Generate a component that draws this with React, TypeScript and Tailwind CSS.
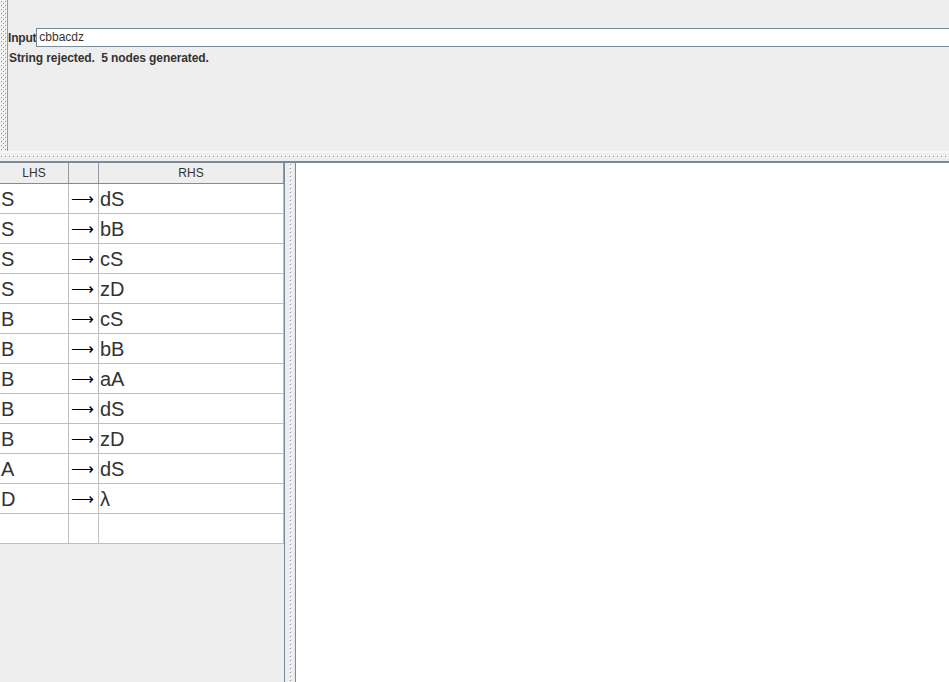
import React from "react";

function Bumps({ id, className }: { id: string; className: string }) {
  return (
    <svg className={className} xmlns="http://www.w3.org/2000/svg">
      <defs>
        <pattern id={id} width="4" height="4" patternUnits="userSpaceOnUse">
          <rect x="0" y="0" width="1" height="1" fill="#ffffff" />
          <rect x="1" y="1" width="1" height="1" fill="#7f91a8" />
          <rect x="2" y="2" width="1" height="1" fill="#ffffff" />
          <rect x="3" y="3" width="1" height="1" fill="#7f91a8" />
        </pattern>
      </defs>
      <rect width="100%" height="100%" fill={`url(#${id})`} />
    </svg>
  );
}

const rows: [string, string][] = [
  ["S", "dS"],
  ["S", "bB"],
  ["S", "cS"],
  ["S", "zD"],
  ["B", "cS"],
  ["B", "bB"],
  ["B", "aA"],
  ["B", "dS"],
  ["B", "zD"],
  ["A", "dS"],
  ["D", "λ"],
  ["", ""],
];

export default function App() {
  return (
    <div
      className="relative w-[949px] h-[682px] overflow-hidden bg-[#eeeeee] flex flex-col text-[#333333]"
      style={{ fontFamily: '"Liberation Sans", Arial, sans-serif' }}
    >
      {/* top area */}
      <div className="h-[151px] flex flex-row shrink-0">
        <div className="w-[7px] h-full bg-[#eeeeee]">
          <Bumps id="b1" className="w-[7px] h-full block" />
        </div>
        <div className="w-px h-full bg-[#8e9aa6]" />
        <div className="flex-1 flex flex-col pt-[28px] min-w-0">
          <div className="flex flex-row items-center h-[19px]">
            <span className="text-[12px] font-bold leading-[19px] tracking-[-0.2px] pt-[1px]">Input</span>
            <div className="flex-1 -mr-[6px] h-[19px] border border-[#7a8a99] bg-white flex items-center pl-[2px]">
              <span className="text-[12px] leading-[17px]">cbbacdz</span>
            </div>
          </div>
          <div className="pl-[1px] text-[12px] font-bold leading-[16px] mt-[3px] whitespace-pre tracking-[-0.1px]">
            String rejected.  5 nodes generated.
          </div>
        </div>
      </div>

      {/* horizontal splitter */}
      <div className="h-[10px] shrink-0 flex flex-col">
        <div className="h-[2px] bg-[#f8f8f8]" />
        <div className="h-[2px]" />
        <Bumps id="b2" className="w-full h-[3px] block" />
        <div className="flex-1" />
      </div>
      <div className="h-[2px] shrink-0 bg-[#7a8a99]" />

      {/* lower area */}
      <div className="flex-1 flex flex-row min-h-0">
        <div className="w-[285px] shrink-0 border-r border-[#7a8a99] flex flex-col">
          <div className="flex flex-row h-[21px] border-b border-[#8a8a8a] bg-[#eeeeee] text-[12px] leading-[20px]">
            <div className="w-[69px] border-r border-[#8e9aa6] text-center">LHS</div>
            <div className="w-[30px] border-r border-[#8e9aa6]" />
            <div className="w-[185px] border-r border-[#8e9aa6] text-center">RHS</div>
          </div>
          {rows.map(([l, r], i) => (
            <div key={i} className="flex flex-row h-[30px] bg-white border-b border-[#c0c0c0] w-[284px] text-[20px] leading-[30px]">
              <div className="w-[69px] border-r border-[#c0c0c0] pl-[1px]">{l}</div>
              <div className="w-[30px] border-r border-[#c0c0c0] relative text-black">
                {r !== "" && (
                  <span
                    className="absolute left-[2px] top-0 leading-[29px] text-[16px] font-extralight"
                    style={{ fontFamily: '"DejaVu Sans", sans-serif' }}
                  >
                    ⟶
                  </span>
                )}
              </div>
              <div className="w-[185px] border-r border-[#c0c0c0] pl-[1px]">{r}</div>
            </div>
          ))}
        </div>
        <div className="w-[10px] shrink-0 bg-[#eeeeee] flex flex-row">
          <div className="w-[4px]" />
          <Bumps id="b3" className="w-[3px] h-full block" />
        </div>
        <div className="flex-1 bg-white border-l border-[#7a8a99]" />
      </div>
    </div>
  );
}
